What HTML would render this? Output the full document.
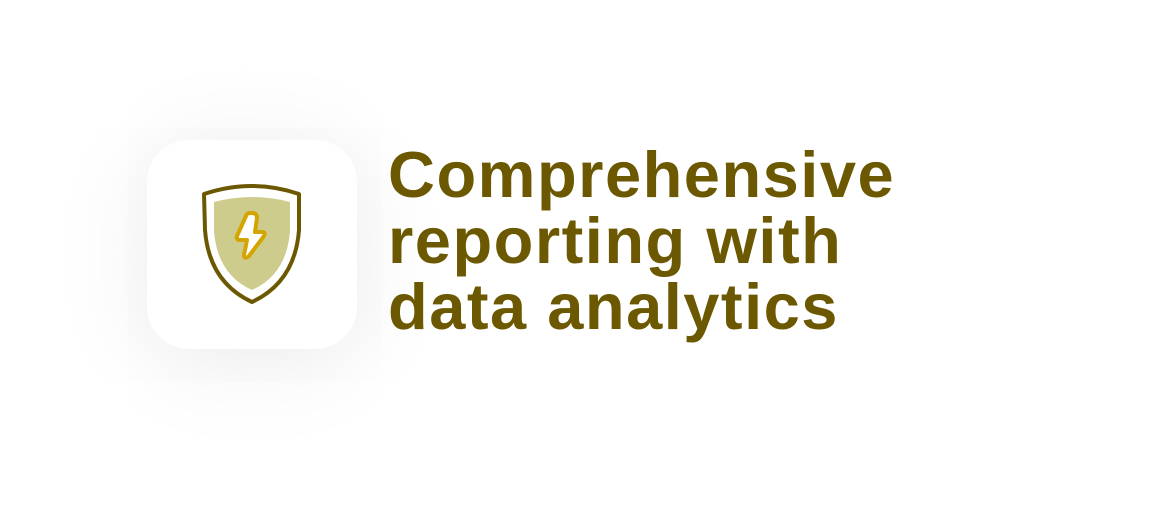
<!DOCTYPE html>
<html><head><style>
html,body{margin:0;width:1149px;height:505px;background:#fff;overflow:hidden}
.card{position:absolute;left:147px;top:140px;width:210px;height:209px;border-radius:42px;background:#fff;box-shadow:0 10px 100px rgba(0,0,0,0.09)}
.t{position:absolute;left:388px;top:142px;font-family:"Liberation Sans",sans-serif;font-weight:bold;font-size:65px;line-height:66px;color:#6b5800;letter-spacing:1.5px;white-space:nowrap}
</style></head><body>
<div class="card"></div>
<svg style="position:absolute;left:0;top:0" width="1149" height="505">
<path d="M204 194 Q252 178 299 194 L299 230 Q295 282 252 302 Q209 282 205 230 Z" fill="#fff" stroke="#6b5800" stroke-width="4" stroke-linejoin="round"/>
<path d="M214 202 Q252 192 290 202 L290 232 Q286 275 252 290 Q218 275 214 232 Z" fill="#cdcc8c"/>
<path d="M246 216 L237 236 Q236 240 240 240 L247 240 L244 255 Q244 260 249 256 L264 236 Q266 232 262 232 L255 232 L257 218 Q257 213 252 213 L250 213 Q247 213 246 216 Z" fill="#fff" stroke="#d4a500" stroke-width="4" stroke-linejoin="round"/>
</svg>
<div class="t">Comprehensive<br>reporting with<br>data analytics</div>
</body></html>
